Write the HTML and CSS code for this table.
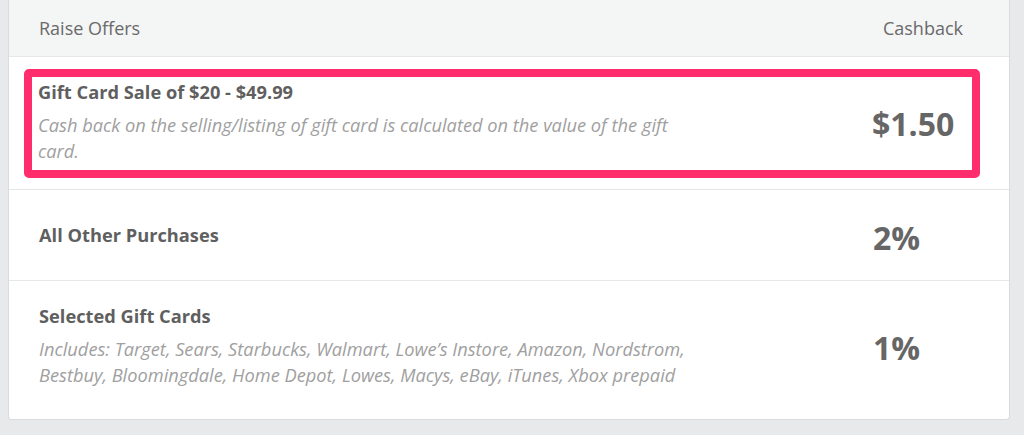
FILE: index.html
```html
<!DOCTYPE html>
<html lang="en">
<head>
<meta charset="utf-8">
<title>Raise Offers</title>
<link rel="stylesheet" href="styles.css">
</head>
<body>
<div class="card">
  <div class="head">
    <span class="head-label">Raise Offers</span>
    <span class="head-cash">Cashback</span>
  </div>
  <div class="row row-first">
    <div class="highlight">
      <div class="cells">
        <div class="text">
          <div class="title">Gift Card Sale of $20 - $49.99</div>
          <div class="desc">Cash back on the selling/listing of gift card is calculated on the value of the gift card.</div>
        </div>
        <div class="value">$1.50</div>
      </div>
    </div>
  </div>
  <div class="row row-mid">
    <div class="cells">
      <div class="text">
        <div class="title">All Other Purchases</div>
      </div>
      <div class="value">2%</div>
    </div>
  </div>
  <div class="row row-last">
    <div class="cells">
      <div class="text">
        <div class="title">Selected Gift Cards</div>
        <div class="desc">Includes: Target, Sears, Starbucks, Walmart, Lowe’s Instore, Amazon, Nordstrom, Bestbuy, Bloomingdale, Home Depot, Lowes, Macys, eBay, iTunes, Xbox prepaid</div>
      </div>
      <div class="value">1%</div>
    </div>
  </div>
</div>
</body>
</html>
```

FILE: styles.css
```css
html, body {
  margin: 0;
  padding: 0;
}
body {
  background: #e8e9ea;
  font-family: "Open Sans", "Liberation Sans", sans-serif;
  color: #666;
  height: 435px;
  overflow: hidden;
}
.card {
  margin-left: 8px;
  width: 1000px;
  background: #fff;
  border: 1px solid #dadbdc;
  border-top: none;
  border-radius: 0 0 4px 4px;
}
.head {
  height: 56px;
  background: #f4f5f5;
  border-bottom: 1px solid #e6e7e7;
  display: flex;
  align-items: center;
  justify-content: space-between;
  padding: 0 46px 0 30px;
  font-size: 18px;
  color: #6a6a6a;
}
.row {
  border-bottom: 1px solid #e6e7e7;
}
.row-last {
  border-bottom: none;
}
.row-first {
  padding: 12px 29px 11px 15px;
}
.highlight {
  border: 8px solid #ff2d6b;
  border-radius: 5px;
  padding: 2px 6px 6px 6px;
}
.row-mid {
  height: 90px;
  display: flex;
  align-items: center;
  padding: 0 29px 0 30px;
}
.row-mid .cells {
  flex: 1;
}
.row-last {
  padding: 22px 29px 31px 30px;
}
.cells {
  display: grid;
  grid-template-columns: 834px 1fr;
  align-items: center;
}
.text {
  width: 660px;
}
.title {
  font-weight: 700;
  font-size: 18.25px;
  line-height: 26px;
  color: #5f5f5f;
}
.desc {
  margin-top: 7px;
  font-style: italic;
  font-size: 18.25px;
  line-height: 26px;
  color: #a0a0a0;
}
.value {
  margin-top: 5px;
  font-weight: 700;
  font-size: 32px;
  line-height: 40px;
  color: #666;
}
```
